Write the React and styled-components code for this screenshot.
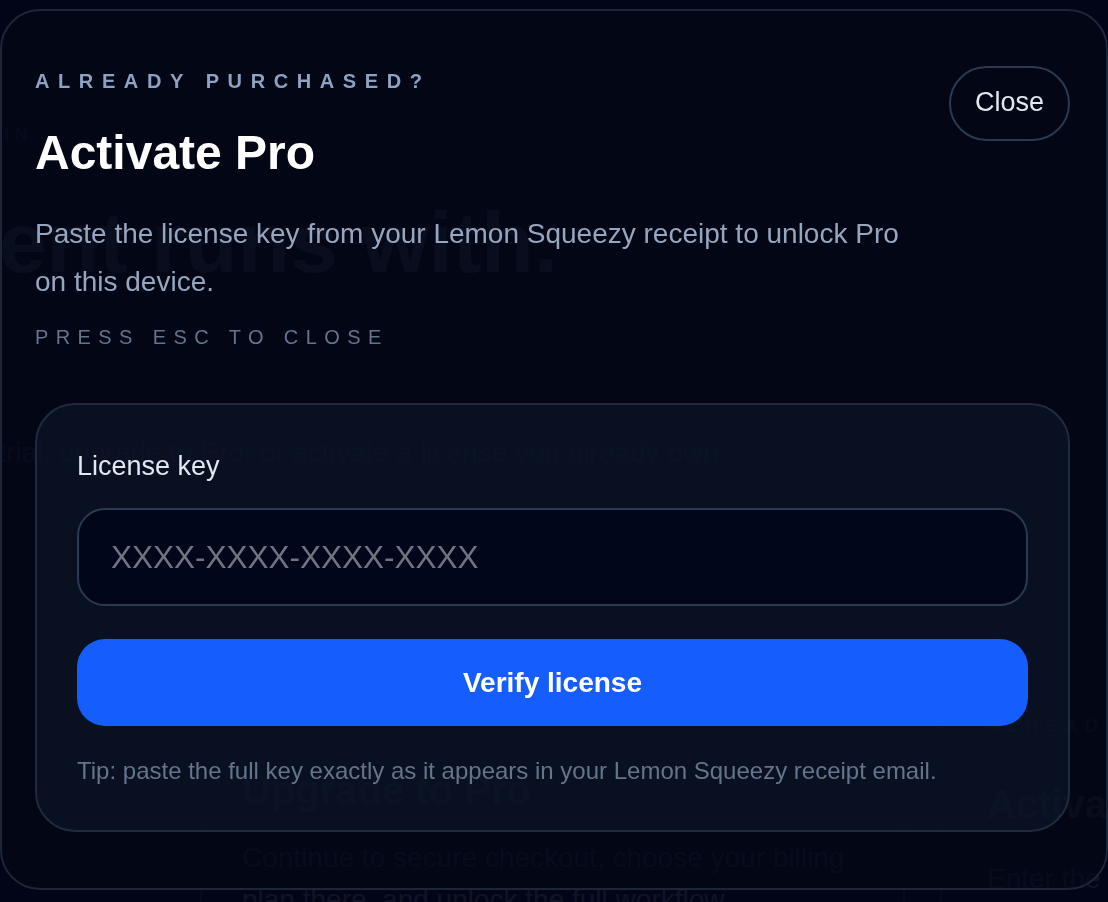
import React from "react";
import styled, { createGlobalStyle } from "styled-components";

const GlobalStyle = createGlobalStyle`
  html, body {
    margin: 0;
    padding: 0;
    background: #020617;
    font-family: "Liberation Sans", Arial, sans-serif;
    overflow: hidden;
  }
  * { box-sizing: border-box; }
`;

function App() {
  return (
    <>
      <GlobalStyle />
      <Page>
        <Hero>
          <HeroLabel>Sign in</HeroLabel>
          <HeroTitle>Agent runs with.</HeroTitle>
          <HeroText>Start a trial, upgrade to Pro, or activate a license you already own.</HeroText>
        </Hero>
        <Cards>
          <UpgradeCard>
            <GhostTitle>Upgrade to Pro</GhostTitle>
            <GhostText $gap={23}>
              Continue to secure checkout, choose your billing plan there, and unlock the full workflow.
            </GhostText>
          </UpgradeCard>
          <ActivateCard>
            <GhostEyebrow>Already purchased?</GhostEyebrow>
            <GhostTitle $gap={42}>Activate Pro</GhostTitle>
            <GhostText $gap={30}>Enter the license key from your receipt.</GhostText>
          </ActivateCard>
        </Cards>
      </Page>

      <Overlay>
        <Modal role="dialog" aria-modal="true">
          <Header>
            <div>
              <Eyebrow>Already purchased?</Eyebrow>
              <Title>Activate Pro</Title>
              <Description>
                Paste the license key from your Lemon Squeezy receipt to unlock Pro on this device.
              </Description>
              <Hint>Press Esc to close</Hint>
            </div>
            <CloseButton type="button">Close</CloseButton>
          </Header>

          <FormCard>
            <Label htmlFor="license">License key</Label>
            <KeyInput id="license" type="text" placeholder="XXXX-XXXX-XXXX-XXXX" />
            <VerifyButton type="button">Verify license</VerifyButton>
            <Tip>Tip: paste the full key exactly as it appears in your Lemon Squeezy receipt email.</Tip>
          </FormCard>
        </Modal>
      </Overlay>
    </>
  );
}

export default App;

/* page behind the dialog */
const Page = styled.div`
  height: 902px;
  overflow: hidden;
  background: #020617;
  color: #8391a7;
  padding-top: 124px;
  margin-left: -92px;
`;

const Hero = styled.div`
  display: flex;
  flex-direction: column;
`;

const HeroLabel = styled.div`
  margin-left: 20px;
  font-size: 18px;
  font-weight: 700;
  letter-spacing: 0.3em;
  text-transform: uppercase;
  color: #64748b;
`;

const HeroTitle = styled.h1`
  margin: 54px 0 0 -24px;
  font-size: 86px;
  font-weight: 700;
  line-height: 1;
  white-space: nowrap;
  color: #b4c0d2;
`;

const HeroText = styled.p`
  margin: 144px 0 0;
  font-size: 28px;
  line-height: 48px;
  max-width: 840px;
`;

const Cards = styled.div`
  display: grid;
  grid-template-columns: 705px 480px;
  gap: 35px;
  margin: 151px 0 0 292px;
  align-items: start;
`;

const UpgradeCard = styled.div`
  margin-top: 100px;
  border: 2px solid #2a3648;
  border-radius: 40px;
  padding: 36px 40px;
`;

const ActivateCard = styled.div`
  border: 2px solid #2a3648;
  border-radius: 40px;
  padding: 84px 45px;
`;

const GhostEyebrow = styled.div`
  font-size: 18px;
  line-height: 24px;
  font-weight: 700;
  letter-spacing: 0.4em;
  text-transform: uppercase;
  color: #64748b;
`;

const GhostTitle = styled.div`
  margin-top: ${(p) => p.$gap || 0}px;
  font-size: 40px;
  line-height: 48px;
  font-weight: 700;
  white-space: nowrap;
  color: #94a3b8;
`;

const GhostText = styled.div`
  margin-top: ${(p) => p.$gap || 0}px;
  font-size: 28px;
  line-height: 42px;
`;

/* dialog */
const Overlay = styled.div`
  position: fixed;
  inset: 0;
  background: rgba(2, 6, 23, 0.9);
  padding: 9px 0 12px;
  display: flex;
`;

const Modal = styled.div`
  flex: 1;
  border: 2px solid #1c2638;
  border-radius: 40px;
  background: rgba(3, 7, 21, 0.6);
  padding: 56px 36px 0 33px;
  display: flex;
  flex-direction: column;
`;

const Header = styled.div`
  display: flex;
  justify-content: space-between;
  align-items: flex-start;
`;

const Eyebrow = styled.div`
  font-size: 20px;
  line-height: 28px;
  font-weight: 700;
  letter-spacing: 0.43em;
  text-transform: uppercase;
  color: #8da2c2;
`;

const Title = styled.h2`
  margin: 29px 0 0;
  font-size: 48px;
  line-height: 58px;
  font-weight: 700;
  color: #ffffff;
`;

const Description = styled.p`
  margin: 28px 0 0;
  max-width: 900px;
  font-size: 28px;
  line-height: 48px;
  color: #97a6bf;
`;

const Hint = styled.div`
  margin-top: 17px;
  font-size: 20px;
  line-height: 28px;
  letter-spacing: 0.37em;
  text-transform: uppercase;
  color: #64748b;
`;

const CloseButton = styled.button`
  flex: none;
  width: 121px;
  height: 75px;
  margin-top: -1px;
  border: 2px solid #2c3a50;
  border-radius: 999px;
  background: transparent;
  color: #e2e8f0;
  font-family: inherit;
  font-size: 27px;
  padding: 0 0 2px;
  cursor: pointer;
`;

const FormCard = styled.div`
  margin-top: 52px;
  border: 2px solid #1f2b3e;
  border-radius: 40px;
  background: rgba(17, 25, 46, 0.55);
  padding: 45px 40px;
  display: flex;
  flex-direction: column;
`;

const Label = styled.label`
  font-size: 27px;
  line-height: 32px;
  color: #e2e8f0;
`;

const KeyInput = styled.input`
  margin-top: 26px;
  height: 98px;
  border: 2px solid #2a3a52;
  border-radius: 28px;
  background: #01061a;
  padding: 0 32px;
  font-family: inherit;
  font-size: 31.5px;
  color: #e2e8f0;
  outline: none;
  &::placeholder {
    color: #707480;
  }
`;

const VerifyButton = styled.button`
  margin-top: 33px;
  height: 87px;
  border: none;
  border-radius: 28px;
  background: #155dfc;
  color: #ffffff;
  font-family: inherit;
  font-size: 28px;
  font-weight: 700;
  cursor: pointer;
`;

const Tip = styled.p`
  margin: 31px 0 0;
  font-size: 24px;
  line-height: 28px;
  color: #64748b;
`;
